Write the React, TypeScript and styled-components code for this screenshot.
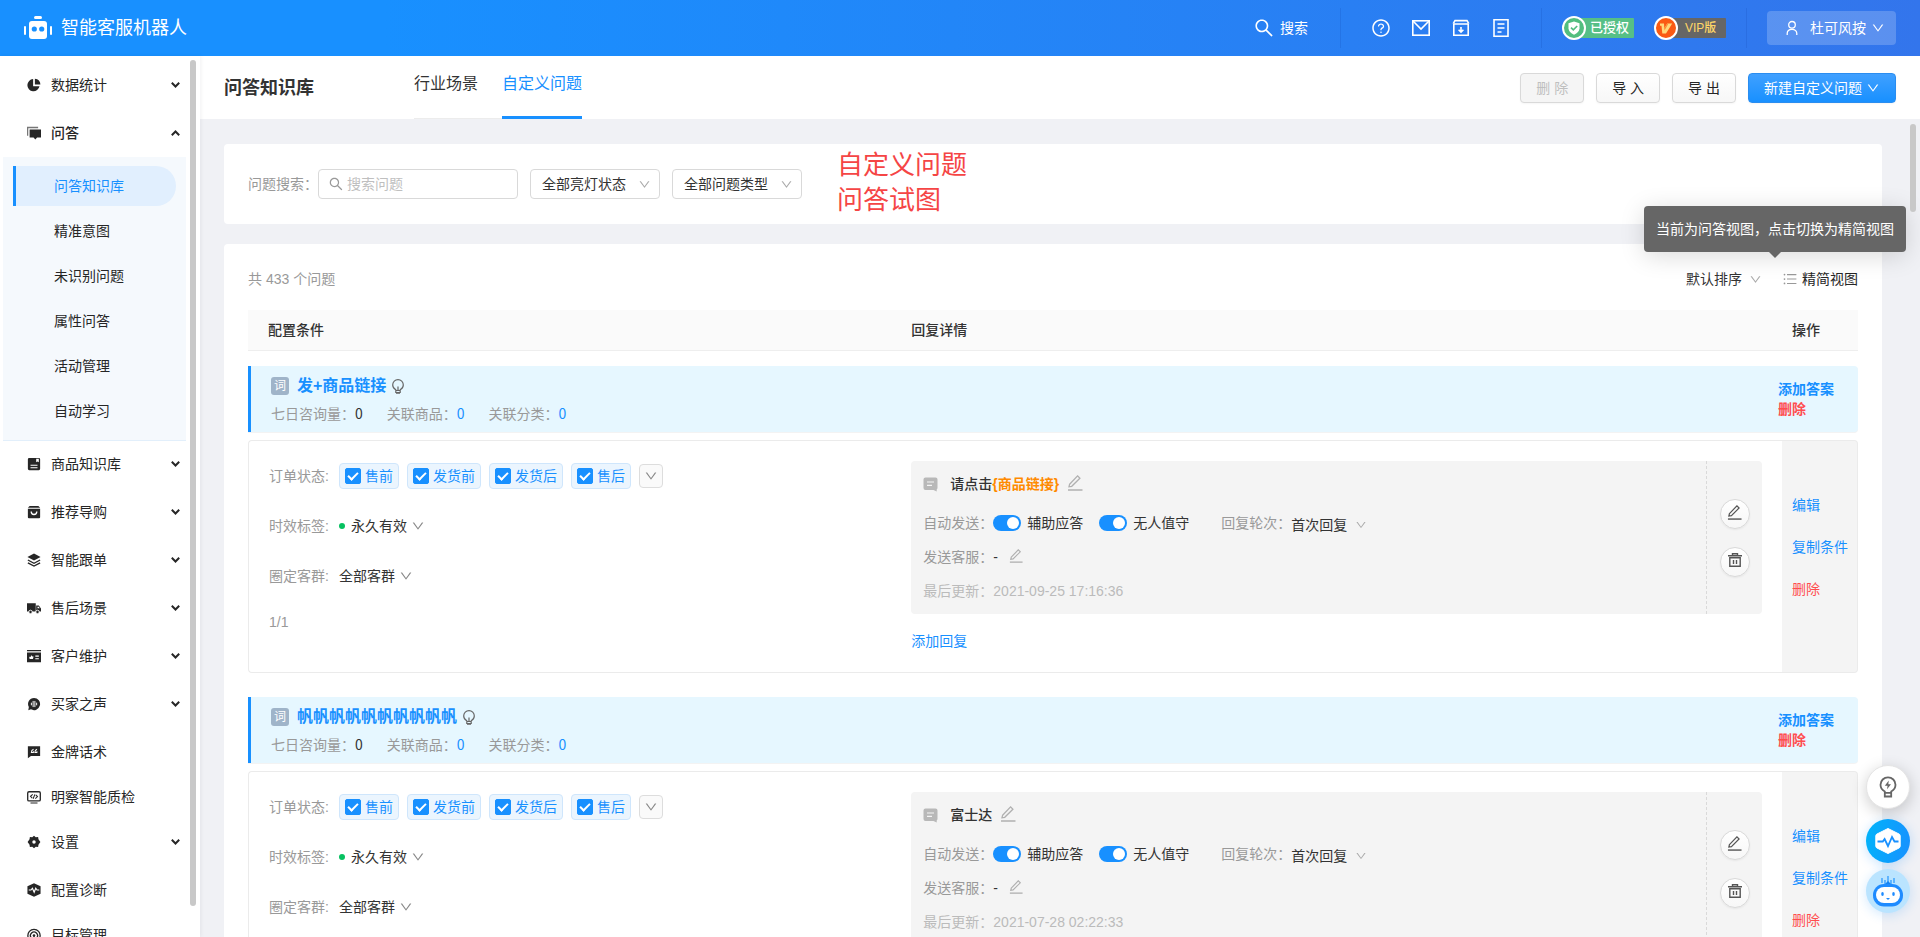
import React from 'react';
import styled, { createGlobalStyle, css } from 'styled-components';
import {
  AiOutlineDown,
  AiOutlineQuestionCircle,
  AiOutlineSearch,
  AiOutlineUnorderedList,
} from 'react-icons/ai';

const blue = '#1890ff';
const red = '#ff4d4f';
const ink = '#333';
const muted = '#999';

const GlobalStyle = createGlobalStyle`
  *, *::before, *::after { box-sizing: border-box; }
  body { margin: 0; overflow: hidden; }
  body, button, input, select {
    font-family: "Liberation Sans", "Noto Sans CJK SC", sans-serif;
    font-size: 14px;
    line-height: 22px;
    color: ${ink};
  }
  button { cursor: pointer; padding: 0; border: 0; background: none; }
  a { color: inherit; text-decoration: none; }
  h1, h2, p, ul { margin: 0; padding: 0; font-size: inherit; }
  li { list-style: none; }
  svg { display: block; flex: none; }
`;

/* ---------- page frame ---------- */

const Page = styled.div`
  display: flex;
  flex-direction: column;
  height: 100vh;
  background: #f0f1f5;
`;

const Body = styled.div`
  display: flex;
  flex: 1;
  min-height: 0;
`;

const Workspace = styled.div`
  display: flex;
  flex-direction: column;
  flex: 1;
  min-width: 0;
`;

const ScrollThumb = styled.span<{ $length: string; $offset: number }>`
  position: absolute;
  top: ${(p) => p.$offset}px;
  right: 4px;
  width: 6px;
  height: ${(p) => p.$length};
  border-radius: 3px;
  background: #c8c8c8;
`;

/* ---------- top bar ---------- */

const TopBar = styled.header`
  display: flex;
  align-items: center;
  flex: none;
  height: 56px;
  padding: 0 24px;
  color: #fff;
  background: linear-gradient(90deg, #1890ff 20%, #3375ec 100%);
`;

const Brand = styled.a`
  display: flex;
  align-items: center;
  gap: 9px;
  font-size: 18px;
  line-height: 26px;
`;

const TopTools = styled.div`
  display: flex;
  align-items: center;
  margin-left: auto;
`;

const SearchButton = styled.button`
  display: flex;
  align-items: center;
  gap: 5px;
  color: #fff;
`;

const TopDivider = styled.span<{ $before: number; $after: number }>`
  width: 1px;
  height: 40px;
  margin: 0 ${(p) => p.$after}px 0 ${(p) => p.$before}px;
  background: rgba(0, 40, 140, 0.12);
`;

const IconGroup = styled.div`
  display: flex;
  gap: 20px;
`;

const TopIcon = styled.button`
  color: #fff;
`;

const BadgeGroup = styled.div`
  display: flex;
  gap: 20px;
`;

const Badge = styled.span<{ $bg: string; $fg: string; $size: number }>`
  display: flex;
  align-items: center;
  width: 72px;
  height: 24px;
  font-size: ${(p) => p.$size}px;
  line-height: 20px;
  font-weight: 500;
  color: ${(p) => p.$fg};
  background: linear-gradient(${(p) => p.$bg}, ${(p) => p.$bg}) 12px 2px / 60px 20px no-repeat;
  border-radius: 4px;
  gap: ${(p) => (p.$size === 13 ? 4 : 7)}px;
`;

const UserButton = styled.button`
  display: flex;
  align-items: center;
  width: 129px;
  height: 34px;
  padding: 0 10px 0 18px;
  border-radius: 4px;
  color: #fff;
  background: rgba(255, 255, 255, 0.2);
`;

const UserName = styled.span`
  margin: 0 5px 0 11px;
`;

/* ---------- side menu ---------- */

const Side = styled.aside`
  position: relative;
  z-index: 1;
  flex: none;
  width: 200px;
  overflow: hidden;
  padding-top: 6px;
  background: #fff;
  box-shadow: 1px 0 4px rgba(0, 21, 41, 0.06);
`;

const MenuRow = styled.a<{ $group?: boolean; $open?: boolean }>`
  display: flex;
  align-items: center;
  gap: 10px;
  height: 45px;
  padding: 0 20px 0 27px;
  color: #262626;
  font-weight: ${(p) => (p.$open ? 500 : 400)};
  ${(p) => p.$group && !p.$open && css`margin-bottom: 3px;`}
`;

const MenuText = styled.span`
  flex: 1;
`;

const SubMenu = styled.ul`
  display: flex;
  flex-direction: column;
  gap: 5px;
  margin: 2px 14px 0 3px;
  padding: 9px 10px 9px;
  background: #f5f9fd;
  border-bottom: 1px solid #e2effb;
`;

const SubLink = styled.a<{ $active?: boolean }>`
  display: block;
  height: 40px;
  padding-left: 38px;
  border-left: 3px solid ${(p) => (p.$active ? blue : 'transparent')};
  border-radius: 0 20px 20px 0;
  line-height: 40px;
  color: ${(p) => (p.$active ? blue : '#262626')};
  background: ${(p) => (p.$active ? '#e1effe' : 'transparent')};
`;

/* ---------- page heading ---------- */

const Heading = styled.div`
  display: flex;
  align-items: center;
  flex: none;
  height: 63px;
  padding: 0 24px;
  background: #fff;
`;

const PageTitle = styled.h1`
  font-size: 18px;
  line-height: 26px;
  font-weight: 700;
`;

const Tabs = styled.nav`
  display: flex;
  gap: 24px;
  align-self: stretch;
  margin-left: 100px;
  box-shadow: inset 0 -1px #ececec;
`;

const Tab = styled.a<{ $active?: boolean }>`
  padding-top: 16px;
  font-size: 16px;
  line-height: 24px;
  color: ${(p) => (p.$active ? blue : ink)};
  border-bottom: 3px solid ${(p) => (p.$active ? blue : 'transparent')};
`;

const HeadingActions = styled.div`
  display: flex;
  gap: 12px;
  margin-left: auto;
`;

const Button = styled.button<{ $primary?: boolean }>`
  display: flex;
  align-items: center;
  justify-content: center;
  gap: 4px;
  height: 30px;
  padding: 0 15px;
  border: 1px solid #d9d9d9;
  border-radius: 4px;
  color: #262626;
  background: linear-gradient(#fff, #f7f7f7);
  box-shadow: 0 1px 2px rgba(0, 0, 0, 0.04);
  &:disabled {
    color: #bfbfbf;
    background: #f5f5f5;
  }
  ${(p) =>
    p.$primary &&
    css`
      color: #fff;
      border-color: #2a8df0;
      background: linear-gradient(#40a0ff, #1890ff);
    `}
`;

/* ---------- filter card ---------- */

const Content = styled.main`
  position: relative;
  flex: 1;
  min-height: 0;
`;

const Scroller = styled.div`
  display: flex;
  flex-direction: column;
  gap: 20px;
  height: 100%;
  overflow: auto;
  scrollbar-width: none;
  padding: 25px 38px 0 24px;
`;

const FilterCard = styled.section`
  display: flex;
  align-items: center;
  flex: none;
  gap: 12px;
  height: 80px;
  padding: 0 24px;
  border-radius: 4px;
  background: #fff;
`;

const SearchField = styled.label`
  display: flex;
  align-items: center;
  color: ${muted};
`;

const SearchBox = styled.span`
  display: flex;
  align-items: center;
  gap: 3px;
  width: 200px;
  height: 30px;
  padding: 0 9px;
  border: 1px solid #d9d9d9;
  border-radius: 4px;
`;

const TextInput = styled.input`
  flex: 1;
  min-width: 0;
  padding: 0;
  border: 0;
  outline: 0;
  background: none;
  &::placeholder { color: #bfbfbf; }
`;

const SearchLabel = styled.span`
  width: 70px;
`;

const SelectWrap = styled.span<{ $boxed?: boolean }>`
  display: inline-grid;
  align-items: center;
  color: #aaa;
  > * { grid-area: 1 / 1; }
  > svg {
    justify-self: end;
    pointer-events: none;
    margin-right: ${(p) => (p.$boxed ? 9 : 0)}px;
  }
`;

const PlainSelect = styled.select<{ $chevronSpace: number }>`
  appearance: none;
  padding: 0 ${(p) => p.$chevronSpace}px 0 0;
  border: 0;
  outline: 0;
  background: none;
`;

const BoxSelect = styled(PlainSelect)`
  width: 130px;
  height: 30px;
  padding-left: 11px;
  border: 1px solid #d9d9d9;
  border-radius: 4px;
`;

const Note = styled.p`
  align-self: flex-start;
  margin-left: 23px;
  padding-top: 4px;
  font-size: 26px;
  line-height: 35px;
  color: #f54545;
`;

/* ---------- question list ---------- */

const ListCard = styled.section`
  flex: none;
  padding: 24px 24px 0;
  border-radius: 4px 4px 0 0;
  background: #fff;
`;

const ListToolbar = styled.div`
  display: flex;
  align-items: center;
  height: 42px;
  padding-bottom: 20px;
`;

const Total = styled.span`
  color: ${muted};
  margin-right: auto;
`;

const ViewSwitch = styled.button`
  position: relative;
  display: flex;
  align-items: center;
  gap: 4px;
  margin-left: 20px;
  color: #262626;
`;

const Tooltip = styled.span`
  position: absolute;
  right: -48px;
  bottom: calc(100% + 16px);
  padding: 12px;
  border-radius: 4px;
  white-space: nowrap;
  color: #fff;
  background: #666;
  box-shadow: 0 4px 24px rgba(0, 0, 0, 0.15);
  &::after {
    content: '';
    position: absolute;
    top: 100%;
    left: 50%;
    margin-left: -6px;
    border: 6px solid transparent;
    border-top-color: #666;
    border-bottom-width: 0;
  }
`;

const Table = styled.table`
  width: 100%;
  table-layout: fixed;
  border-collapse: separate;
  border-spacing: 0;
`;

const ConditionCol = styled.col`
  width: 41.2%;
`;

const ActionCol = styled.col`
  width: 76px;
`;

const HeadCell = styled.th<{ $indent: number }>`
  height: 41px;
  padding: 0 0 0 ${(p) => p.$indent}px;
  border-bottom: 1px solid #eee;
  text-align: left;
  font-weight: 500;
  background: #fafafa;
`;

const QuestionGroup = styled.tbody`
  &:first-of-type td:only-child { padding-top: 15px; }
`;

const BannerCell = styled.td`
  padding: 24px 0 8px;
`;

const Banner = styled.div`
  display: flex;
  height: 66px;
  border-left: 3px solid ${blue};
  border-radius: 0 4px 4px 0;
  background: #e6f7ff;
  box-shadow: 0 1px #f3f3f3;
`;

const BannerInfo = styled.div`
  display: flex;
  flex-direction: column;
  gap: 4px;
  flex: 1;
  padding: 8px 0 0 20px;
`;

const BannerActions = styled.div`
  display: flex;
  flex-direction: column;
  align-items: flex-start;
  width: 80px;
  padding-top: 13px;
`;

const BannerAction = styled.button<{ $danger?: boolean }>`
  line-height: 20px;
  font-weight: 700;
  color: ${(p) => (p.$danger ? red : blue)};
`;

const QuestionLine = styled.div`
  display: flex;
  align-items: center;
  color: #666;
`;

const WordMark = styled.span`
  width: 18px;
  height: 18px;
  margin-right: 8px;
  border-radius: 3px;
  font-size: 12px;
  line-height: 18px;
  text-align: center;
  color: #fff;
  background: #9fb4c9;
`;

const QuestionTitle = styled.h2`
  margin-right: 6px;
  font-size: 16px;
  line-height: 24px;
  font-weight: 700;
  color: ${blue};
`;

const Stats = styled.div`
  display: flex;
  gap: 24px;
  color: ${muted};
`;

const StatValue = styled.span<{ $link?: boolean }>`
  font-family: "Noto Sans CJK SC", sans-serif;
  color: ${(p) => (p.$link ? blue : ink)};
`;

const DetailCell = styled.td`
  padding: 0;
  vertical-align: top;
  border: 1px solid #ebebeb;
  border-width: 1px 0;
`;

const ConditionCell = styled(DetailCell)`
  padding: 22px 20px 0;
  border-left-width: 1px;
  border-radius: 4px 0 0 4px;
`;

const ReplyCell = styled(DetailCell)`
  padding: 20px 20px 20px 0;
`;

const ActionCell = styled(DetailCell)`
  padding: 53px 0 0 10px;
  border-right-width: 1px;
  border-radius: 0 4px 4px 0;
  background: #f4f4f4;
`;

const Conditions = styled.div`
  display: flex;
  flex-direction: column;
  gap: 24px;
`;

const ConditionRow = styled.div`
  display: flex;
  align-items: center;
  gap: 8px;
  height: 26px;
`;

const ConditionLabel = styled.span`
  width: 62px;
  color: ${muted};
`;

const Tag = styled.label`
  display: flex;
  align-items: center;
  gap: 4px;
  height: 26px;
  padding: 0 5px;
  border: 1px solid #cfe6fc;
  border-radius: 4px;
  color: ${blue};
  background: #ebf5fe;
`;

const Check = styled.input`
  appearance: none;
  display: grid;
  place-items: center;
  width: 16px;
  height: 16px;
  margin: 0;
  border-radius: 2px;
  border: 1px solid ${blue};
  &:checked { background: ${blue}; }
  &:checked::after {
    content: '';
    width: 10px;
    height: 6px;
    margin-bottom: 3px;
    border: solid #fff;
    border-width: 0 0 2px 2px;
    transform: rotate(-45deg);
  }
`;

const MoreButton = styled.button`
  display: grid;
  place-items: center;
  width: 24px;
  height: 24px;
  border: 1px solid #ddd;
  border-radius: 4px;
  color: #888;
  background: #fafafa;
`;

const ValueButton = styled.button`
  display: flex;
  align-items: center;
  gap: 4px;
  > svg { color: #888; }
`;

const Dot = styled.span`
  width: 6px;
  height: 6px;
  margin-right: 2px;
  border-radius: 50%;
  background: #07c160;
`;

const Position = styled.span`
  line-height: 18px;
  color: ${muted};
`;

const ReplyBox = styled.div`
  display: flex;
  border-radius: 4px;
  background: #f4f4f4;
`;

const ReplyBody = styled.div`
  display: flex;
  flex-direction: column;
  gap: 12px;
  flex: 1;
  padding: 12px;
`;

const ReplyTools = styled.div`
  display: flex;
  flex-direction: column;
  align-items: center;
  justify-content: center;
  gap: 18px;
  width: 56px;
  border-left: 1px dashed #d9d9d9;
`;

const RoundButton = styled.button`
  display: grid;
  place-items: center;
  width: 30px;
  height: 30px;
  border: 1px solid #d9d9d9;
  border-radius: 50%;
  color: #555;
  background: linear-gradient(#fff, #f7f7f7);
  box-shadow: 0 1px 2px rgba(0, 0, 0, 0.06);
  > svg { margin-bottom: 3px; }
`;

const ReplyText = styled.div`
  display: flex;
  align-items: center;
  margin-bottom: 5px;
  font-weight: 500;
  > svg { margin-right: 12px; }
`;

const Variable = styled.span`
  font-weight: 700;
  color: #ff8a00;
`;

const InlineEdit = styled.button`
  margin-left: 8px;
  padding-bottom: 2px;
  color: #b0b0b0;
`;

const ReplyRow = styled.div<{ $faint?: boolean }>`
  display: flex;
  align-items: center;
  height: 22px;
  color: ${(p) => (p.$faint ? '#bbb' : ink)};
  > ${InlineEdit} { margin-left: 11px; }
`;

const FieldLabel = styled.span`
  color: ${muted};
`;

const SwitchLabel = styled.label`
  display: flex;
  align-items: center;
  gap: 6px;
  margin-right: 16px;
`;

const Switch = styled.input`
  appearance: none;
  width: 28px;
  height: 16px;
  margin: 0;
  border-radius: 8px;
  background: #bbb;
  &:checked { background: ${blue}; }
  &::before {
    content: '';
    display: block;
    width: 12px;
    height: 12px;
    margin: 2px;
    border-radius: 50%;
    background: #fff;
  }
  &:checked::before { margin-left: 14px; }
`;

const RoundField = styled.label`
  display: flex;
  align-items: center;
  margin-left: 16px;
  color: ${muted};
  > span { padding-top: 4px; }
`;

const AddReply = styled.button`
  display: block;
  margin-top: 16px;
  color: ${blue};
`;

const RowActions = styled.div`
  display: flex;
  flex-direction: column;
  align-items: flex-start;
  gap: 20px;
`;

const RowAction = styled.button<{ $danger?: boolean }>`
  white-space: nowrap;
  color: ${(p) => (p.$danger ? red : blue)};
`;

/* ---------- floating helpers ---------- */

const FloatStack = styled.div`
  position: fixed;
  right: 10px;
  bottom: 24px;
  z-index: 2;
  display: flex;
  flex-direction: column;
  gap: 6px;
`;

const FloatButton = styled.button<{ $kind: 'tip' | 'health' | 'bot' }>`
  display: grid;
  place-items: center;
  width: 44px;
  height: 44px;
  border-radius: 50%;
  ${(p) =>
    p.$kind === 'tip' &&
    css`
      margin-bottom: 4px;
      color: #666;
      border: 1px solid #e4e4e4;
      background: #fff;
      box-shadow: 0 4px 16px rgba(0, 0, 0, 0.2);
    `}
  ${(p) =>
    p.$kind === 'health' &&
    css`
      background: linear-gradient(100deg, #00b4fa, #1890ff);
      box-shadow: 0 2px 12px rgba(24, 144, 255, 0.25);
    `}
  ${(p) =>
    p.$kind === 'bot' &&
    css`
      background: #bae4ff;
      box-shadow: 0 2px 12px rgba(24, 144, 255, 0.2);
    `}
`;

/* ---------- drawings ---------- */

const RobotLogo = () => (
  <svg width="28" height="24" viewBox="0 0 28 24" fill="#fff">
    <rect x="10" y="0" width="8" height="3" rx="1.5" />
    <rect x="5" y="5" width="18" height="18" rx="3" />
    <rect x="0" y="10" width="2" height="9" rx="1" />
    <rect x="26" y="10" width="2" height="9" rx="1" />
    <circle cx="10.3" cy="13" r="2.6" fill="#1890ff" />
    <circle cx="17.7" cy="13" r="2.6" fill="#1890ff" />
  </svg>
);

const topStroke = { width: 20, height: 20, viewBox: '0 0 20 20', fill: 'none', stroke: 'currentColor', strokeWidth: 1.6 };

const MailIcon = () => (
  <svg {...topStroke}>
    <rect x="1.8" y="2.8" width="16.4" height="14.4" />
    <path d="M2 3l8 8 8-8" />
  </svg>
);
const InboxIcon = () => (
  <svg {...topStroke}>
    <path d="M2 6h16M2.8 6v11.2h14.4V6M2.2 5.6L4 2.6h12l1.8 3M10 9v5M7.6 11.8l2.4 2.4 2.4-2.4" />
  </svg>
);
const NoteIcon = () => (
  <svg {...topStroke}>
    <path d="M3 1.8h14v16.4H3zM6.5 6h7M6.5 10h7M6.5 14h4" />
  </svg>
);
const ShieldMark = () => (
  <svg width="24" height="24" viewBox="0 0 24 24">
    <circle cx="12" cy="12" r="11" fill="#52be7f" stroke="#fff" strokeWidth="2" />
    <path d="M12 5.5l5.5 1.7v5c0 3-2.300 5-5.500 6.500-3.200-1.500-5.500-3.500-5.500-6.500v-5z" fill="#fff" />
    <path d="M9 11.600l2.300 2.300 3.900-3.900" fill="none" stroke="#52be7f" strokeWidth="1.600" />
  </svg>
);
const VipMark = () => (
  <svg width="24" height="24" viewBox="0 0 24 24">
    <circle cx="12" cy="12" r="11" fill="#fb5a13" stroke="#fff" strokeWidth="2" />
    <path d="M6 7.500h4l.3 4.800 2.900-4.800h5l-6.200 10h-3.700l-.8-7.800H6z" fill="#ffd87a" />
    <path d="M10.300 12.300l2.900-4.800h1.300l-4 7z" fill="#fb8a33" />
  </svg>
);
const PersonIcon = () => (
  <svg width="14" height="16" viewBox="0 0 14 16" fill="none" stroke="#fff" strokeWidth="1.300">
    <circle cx="7" cy="4.800" r="3.300" />
    <path d="M2.200 15v-1.500c0-2.600 2-4.200 4.800-4.200s4.800 1.600 4.800 4.200V15" />
  </svg>
);

const Caret = ({ up }: { up?: boolean }) => (
  <svg width="9" height="6" viewBox="0 0 9 6" fill="none" stroke="#262626" strokeWidth="2">
    <path d={up ? 'M.8 5.200l3.700-3.700 3.700 3.700' : 'M.8.800l3.700 3.700L8.200.800'} />
  </svg>
);

const PencilIcon = ({ size }: { size: number }) => (
  <svg width={size} height={size} viewBox="0 0 16 16" fill="none" stroke="currentColor" strokeWidth="1.300">
    <path d="M2.600 9.200L10.600.900l2.300 2.300-8.200 8.100-2.700.5z" />
    <path d="M1 15h14.500" strokeWidth="1.500" />
  </svg>
);
const TrashIcon = () => (
  <svg width="14" height="14" viewBox="0 0 14 14" fill="none" stroke="currentColor" strokeWidth="1.400">
    <path d="M0 2.700h14M4.500 2.500V.7h5v1.800M1.800 4.800h10.400v8.500H1.800zM5.500 7v4M8.500 7v4" />
  </svg>
);
const ChatIcon = () => (
  <svg width="15" height="15" viewBox="0 0 15 15">
    <path d="M2.500.5h10a2 2 0 0 1 2 2v8.500a2 2 0 0 1-.8 1.500v2L10.500 13h-8a2 2 0 0 1-2-2V2.500a2 2 0 0 1 2-2z" fill="#b8b8b8" />
    <path d="M4 5h7M4 8.300h5" stroke="#f4f4f4" strokeWidth="1.200" />
  </svg>
);
const BulbIcon = () => (
  <svg width="12" height="15" viewBox="0 0 12 15" fill="none" stroke="currentColor" strokeWidth="1.200">
    <path d="M3.800 10.800C1.800 9.600.7 8 .7 5.900a5.300 5.300 0 0 1 10.600 0c0 2.100-1.100 3.700-3.100 4.900v2.700H3.800zM4 11.500h4M6 7.500v3.500M4 14.200h4" />
  </svg>
);
const TipIcon = () => (
  <svg width="18" height="22" viewBox="0 0 18 22" fill="none" stroke="currentColor" strokeWidth="1.800">
    <path d="M5.800 15.500C3 14 1.500 11.800 1.500 8.800a7.500 7.500 0 0 1 15 0c0 3-1.500 5.200-4.300 6.700v1.300H5.800zM5.800 16.800v3.700h6.400v-3.700" />
    <path d="M9.800 4.500L5.800 9.800h2.800l-.6 3.500 4-5H9.300z" fill="currentColor" stroke="none" />
  </svg>
);
const HealthIcon = () => (
  <svg width="28" height="28" viewBox="0 0 28 28">
    <path d="M14 1.500l11 5.500a2 2 0 0 1 1.200 1.800v10.400a2 2 0 0 1-1.200 1.800l-11 5.500-11-5.500a2 2 0 0 1-1.200-1.800V8.800A2 2 0 0 1 3 7z" fill="#fff" stroke="#fff" />
    <path d="M3.500 14.500h5.300l1.800-2.500 3.400 7 4-9 2.500 4.500h4" fill="none" stroke="#1890ff" strokeWidth="1.800" />
  </svg>
);
const BotIcon = () => (
  <svg width="32" height="32" viewBox="0 0 32 32">
    <path d="M10 3v5M13 5v4M16 1v8M19 5v4M22 3v5" stroke="#2e9bff" strokeWidth="1.300" />
    <path d="M12 10l4-4 4 4z" fill="#1583f2" />
    <rect x="1" y="9" width="30" height="22.500" rx="11" fill="#1e8bff" />
    <rect x="4" y="12" width="24" height="16" rx="8" fill="#fff" />
    <ellipse cx="10.500" cy="19" rx="1.300" ry="2" fill="#1e8bff" />
    <ellipse cx="21.500" cy="19" rx="1.300" ry="2" fill="#1e8bff" />
    <path d="M14 23h4l-2 2z" fill="#1e8bff" />
  </svg>
);

const menuDrawings: Record<string, React.ReactNode> = {
  pie: (
    <>
      <path d="M7 1.200A7 7 0 1 0 14.300 9.500H7z" />
      <path d="M9 .8v6.700h6.300A7 7 0 0 0 9 .8z" />
    </>
  ),
  chat: (
    <>
      <path d="M.7 11V1.700h12" fill="none" stroke="#777" strokeWidth="1.500" />
      <path d="M3 4h13v9h-4.500l-2 2.300-2-2.300H3z" />
    </>
  ),
  book: (
    <>
      <path d="M2.500 1h11A1.500 1.500 0 0 1 15 2.500v11a1.500 1.500 0 0 1-1.500 1.500h-11A1.500 1.500 0 0 1 1 13.500v-11A1.500 1.500 0 0 1 2.500 1z" />
      <path d="M4 9.500h8M4 12.200h8" stroke="#fff" strokeWidth="1.200" />
      <path d="M10.500 2h3v4l-1.500-1-1.500 1z" fill="#fff" />
    </>
  ),
  bag: (
    <>
      <path d="M3 1h10l2 2H1z" />
      <path d="M1 4.200h14V14a1.200 1.200 0 0 1-1.200 1.200H2.200A1.200 1.200 0 0 1 1 14z" />
      <path d="M4.800 7.500c0 4.500 6.400 4.500 6.400 0" fill="none" stroke="#fff" strokeWidth="1.500" />
    </>
  ),
  layers: (
    <>
      <path d="M8 .5l7.500 4L8 8.500.500 4.500z" />
      <path d="M1 8l7 3.800L15 8M1 11.200L8 15l7-3.800" fill="none" stroke="#262626" strokeWidth="1.500" />
    </>
  ),
  truck: (
    <>
      <path d="M0 2.500h10v9.500H0zM10.500 5h3L16 8.500V12h-5.500z" />
      <circle cx="4" cy="12.500" r="2" stroke="#fff" />
      <circle cx="12" cy="12.500" r="2" stroke="#fff" />
      <path d="M12 6.500h1.500l1 1.700H12z" fill="#fff" />
    </>
  ),
  card: (
    <>
      <path d="M0 1h16v1.600H0zM0 4h16v11H0z" />
      <path d="M9.500 8.200h4M9.500 11.200h4" stroke="#fff" strokeWidth="1.300" />
      <path d="M5 7l1.300 1.500H7.500L6.800 11.500H3L2.500 8.800 4 9z" fill="#fff" />
    </>
  ),
  voice: (
    <>
      <path d="M8 1a7 7 0 1 1-3.500 13.100L1.500 15l.6-3.500A7 7 0 0 1 8 1z" />
      <path d="M5 6.500v3M7 4.500v7M9 4.500v7M11 6.500v3" stroke="#fff" strokeWidth="1.100" />
    </>
  ),
  quote: (
    <>
      <path d="M1 1.500h14v11H4.500L1 15z" />
      <path d="M7.500 5C5.500 5.500 5 6.500 5 8.500h2.300V7M11.500 5C9.500 5.500 9 6.500 9 8.500h2.300V7" fill="none" stroke="#fff" strokeWidth="1.200" />
    </>
  ),
  monitor: (
    <>
      <rect x=".8" y="2" width="14.400" height="10.500" rx="1.500" fill="none" stroke="#262626" strokeWidth="1.500" />
      <path d="M4 14.800h8M6.500 5L4 7.300l2 2M9.500 9.800l2.500-2.300-2-2M9 5L7 10" fill="none" stroke="#262626" strokeWidth="1.200" />
    </>
  ),
  gear: (
    <>
      <path d="M8 .8l2 1.800 2.700-.3.400 2.600L15.300 8l-2.200 3.100-.4 2.600-2.700-.3-2 1.800-2-1.800-2.700.3-.4-2.600L.7 8l2.200-3.100.4-2.600 2.700.3z" />
      <circle cx="8" cy="8" r="2" fill="#fff" />
    </>
  ),
  pulse: (
    <>
      <path d="M8 .3l7.500 3.500v8.400L8 15.700.500 12.200V3.800z" />
      <path d="M2 8h2.500L6.200 6l2 4.500 1.800-4.500L11.500 8H14" fill="none" stroke="#fff" strokeWidth="1.300" />
    </>
  ),
  target: (
    <>
      <path d="M4 14.300A7 7 0 1 1 12 14.300" fill="none" stroke="#262626" strokeWidth="1.500" />
      <path d="M5 11.300A4 4 0 1 1 11 11.300" fill="none" stroke="#262626" strokeWidth="1.500" />
      <circle cx="8" cy="8.500" r="1.500" />
      <path d="M7.300 9h1.400v6H7.300z" />
    </>
  ),
};

/* ---------- data ---------- */

type MenuEntry = { icon: string; text: string; group?: boolean; children?: string[] };

const menu: MenuEntry[] = [
  { icon: 'pie', text: '数据统计', group: true },
  {
    icon: 'chat',
    text: '问答',
    group: true,
    children: ['问答知识库', '精准意图', '未识别问题', '属性问答', '活动管理', '自动学习'],
  },
  { icon: 'book', text: '商品知识库', group: true },
  { icon: 'bag', text: '推荐导购', group: true },
  { icon: 'layers', text: '智能跟单', group: true },
  { icon: 'truck', text: '售后场景', group: true },
  { icon: 'card', text: '客户维护', group: true },
  { icon: 'voice', text: '买家之声', group: true },
  { icon: 'quote', text: '金牌话术' },
  { icon: 'monitor', text: '明察智能质检' },
  { icon: 'gear', text: '设置', group: true },
  { icon: 'pulse', text: '配置诊断' },
  { icon: 'target', text: '目标管理' },
];

type Question = { title: string; reply: string; variable?: string; updated: string };

const questions: Question[] = [
  { title: '发+商品链接', reply: '请点击', variable: '{商品链接}', updated: '2021-09-25 17:16:36' },
  { title: '帆帆帆帆帆帆帆帆帆帆', reply: '富士达', updated: '2021-07-28 02:22:33' },
];

const orderStates = ['售前', '发货前', '发货后', '售后'];

/* ---------- sections ---------- */

const SideMenu = () => (
  <Side>
    <nav>
      {menu.map((m) => (
        <React.Fragment key={m.text}>
          <MenuRow href="#" $group={m.group} $open={!!m.children}>
            <svg width="14" height="14" viewBox="0 0 16 16" fill="#262626">
              {menuDrawings[m.icon]}
            </svg>
            <MenuText>{m.text}</MenuText>
            {m.group && <Caret up={!!m.children} />}
          </MenuRow>
          {m.children && (
            <SubMenu>
              {m.children.map((c, i) => (
                <li key={c}>
                  <SubLink href="#" $active={i === 0}>{c}</SubLink>
                </li>
              ))}
            </SubMenu>
          )}
        </React.Fragment>
      ))}
    </nav>
    <ScrollThumb $offset={4} $length="96%" />
  </Side>
);

const QuestionBlock = ({ q }: { q: Question }) => (
  <QuestionGroup>
    <tr>
      <BannerCell colSpan={3}>
        <Banner>
          <BannerInfo>
            <QuestionLine>
              <WordMark>词</WordMark>
              <QuestionTitle>{q.title}</QuestionTitle>
              <BulbIcon />
            </QuestionLine>
            <Stats>
              <span>七日咨询量：<StatValue>0</StatValue></span>
              <span>关联商品：<StatValue $link>0</StatValue></span>
              <span>关联分类：<StatValue $link>0</StatValue></span>
            </Stats>
          </BannerInfo>
          <BannerActions>
            <BannerAction>添加答案</BannerAction>
            <BannerAction $danger>删除</BannerAction>
          </BannerActions>
        </Banner>
      </BannerCell>
    </tr>
    <tr>
      <ConditionCell>
        <Conditions>
          <ConditionRow>
            <ConditionLabel>订单状态:</ConditionLabel>
            {orderStates.map((s) => (
              <Tag key={s}>
                <Check type="checkbox" defaultChecked />
                {s}
              </Tag>
            ))}
            <MoreButton aria-label="更多状态"><AiOutlineDown size={14} /></MoreButton>
          </ConditionRow>
          <ConditionRow>
            <ConditionLabel>时效标签:</ConditionLabel>
            <ValueButton><Dot />永久有效<AiOutlineDown size={14} /></ValueButton>
          </ConditionRow>
          <ConditionRow>
            <ConditionLabel>圈定客群:</ConditionLabel>
            <ValueButton>全部客群<AiOutlineDown size={14} /></ValueButton>
          </ConditionRow>
          <Position>1/1</Position>
        </Conditions>
      </ConditionCell>
      <ReplyCell>
        <ReplyBox>
          <ReplyBody>
            <ReplyText>
              <ChatIcon />
              {q.reply}
              {q.variable && <Variable>{q.variable}</Variable>}
              <InlineEdit aria-label="编辑回复"><PencilIcon size={16} /></InlineEdit>
            </ReplyText>
            <ReplyRow>
              <FieldLabel>自动发送：</FieldLabel>
              <SwitchLabel><Switch type="checkbox" role="switch" defaultChecked />辅助应答</SwitchLabel>
              <SwitchLabel><Switch type="checkbox" role="switch" defaultChecked />无人值守</SwitchLabel>
              <RoundField>
                回复轮次：
                <SelectWrap>
                  <PlainSelect $chevronSpace={20}><option>首次回复</option></PlainSelect>
                  <AiOutlineDown size={12} />
                </SelectWrap>
              </RoundField>
            </ReplyRow>
            <ReplyRow>
              <FieldLabel>发送客服：</FieldLabel>-
              <InlineEdit aria-label="编辑客服"><PencilIcon size={14} /></InlineEdit>
            </ReplyRow>
            <ReplyRow $faint>最后更新：{q.updated}</ReplyRow>
          </ReplyBody>
          <ReplyTools>
            <RoundButton aria-label="编辑"><PencilIcon size={15} /></RoundButton>
            <RoundButton aria-label="删除"><TrashIcon /></RoundButton>
          </ReplyTools>
        </ReplyBox>
        <AddReply>添加回复</AddReply>
      </ReplyCell>
      <ActionCell>
        <RowActions>
          <RowAction>编辑</RowAction>
          <RowAction>复制条件</RowAction>
          <RowAction $danger>删除</RowAction>
        </RowActions>
      </ActionCell>
    </tr>
  </QuestionGroup>
);

export default function App() {
  return (
    <Page>
      <GlobalStyle />
      <TopBar>
        <Brand href="#"><RobotLogo />智能客服机器人</Brand>
        <TopTools>
          <SearchButton><AiOutlineSearch size={22} />搜索</SearchButton>
          <TopDivider $before={32} $after={30} />
          <IconGroup>
            <TopIcon aria-label="帮助"><AiOutlineQuestionCircle size={20} /></TopIcon>
            <TopIcon aria-label="邮件"><MailIcon /></TopIcon>
            <TopIcon aria-label="下载"><InboxIcon /></TopIcon>
            <TopIcon aria-label="文档"><NoteIcon /></TopIcon>
          </IconGroup>
          <TopDivider $before={30} $after={20} />
          <BadgeGroup>
            <Badge $bg="#56bf86" $fg="#fff" $size={13}><ShieldMark />已授权</Badge>
            <Badge $bg="#666" $fg="#ffd666" $size={12}><VipMark />VIP版</Badge>
          </BadgeGroup>
          <TopDivider $before={20} $after={20} />
          <UserButton>
            <PersonIcon />
            <UserName>杜可风按</UserName>
            <AiOutlineDown size={14} />
          </UserButton>
        </TopTools>
      </TopBar>
      <Body>
        <SideMenu />
        <Workspace>
          <Heading>
            <PageTitle>问答知识库</PageTitle>
            <Tabs>
              <Tab href="#">行业场景</Tab>
              <Tab href="#" $active>自定义问题</Tab>
            </Tabs>
            <HeadingActions>
              <Button disabled>删 除</Button>
              <Button>导 入</Button>
              <Button>导 出</Button>
              <Button $primary>新建自定义问题<AiOutlineDown size={14} /></Button>
            </HeadingActions>
          </Heading>
          <Content>
            <Scroller>
              <FilterCard>
                <SearchField>
                  <SearchLabel>问题搜索：</SearchLabel>
                  <SearchBox>
                    <AiOutlineSearch size={16} />
                    <TextInput placeholder="搜索问题" />
                  </SearchBox>
                </SearchField>
                <SelectWrap $boxed>
                  <BoxSelect $chevronSpace={20} aria-label="亮灯状态"><option>全部亮灯状态</option></BoxSelect>
                  <AiOutlineDown size={13} />
                </SelectWrap>
                <SelectWrap $boxed>
                  <BoxSelect $chevronSpace={20} aria-label="问题类型"><option>全部问题类型</option></BoxSelect>
                  <AiOutlineDown size={13} />
                </SelectWrap>
                <Note>自定义问题<br />问答试图</Note>
              </FilterCard>
              <ListCard>
                <ListToolbar>
                  <Total>共 433 个问题</Total>
                  <SelectWrap>
                    <PlainSelect $chevronSpace={20} aria-label="排序"><option>默认排序</option></PlainSelect>
                    <AiOutlineDown size={13} />
                  </SelectWrap>
                  <ViewSwitch>
                    <AiOutlineUnorderedList size={16} color="#999" />
                    精简视图
                    <Tooltip role="tooltip">当前为问答视图，点击切换为精简视图</Tooltip>
                  </ViewSwitch>
                </ListToolbar>
                <Table>
                  <colgroup>
                    <ConditionCol />
                    <col />
                    <ActionCol />
                  </colgroup>
                  <thead>
                    <tr>
                      <HeadCell $indent={20}>配置条件</HeadCell>
                      <HeadCell $indent={0}>回复详情</HeadCell>
                      <HeadCell $indent={10}>操作</HeadCell>
                    </tr>
                  </thead>
                  {questions.map((q) => (
                    <QuestionBlock key={q.title} q={q} />
                  ))}
                </Table>
              </ListCard>
            </Scroller>
            <ScrollThumb $offset={5} $length="88px" />
          </Content>
        </Workspace>
      </Body>
      <FloatStack>
        <FloatButton $kind="tip" aria-label="提示"><TipIcon /></FloatButton>
        <FloatButton $kind="health" aria-label="诊断"><HealthIcon /></FloatButton>
        <FloatButton $kind="bot" aria-label="助手"><BotIcon /></FloatButton>
      </FloatStack>
    </Page>
  );
}
